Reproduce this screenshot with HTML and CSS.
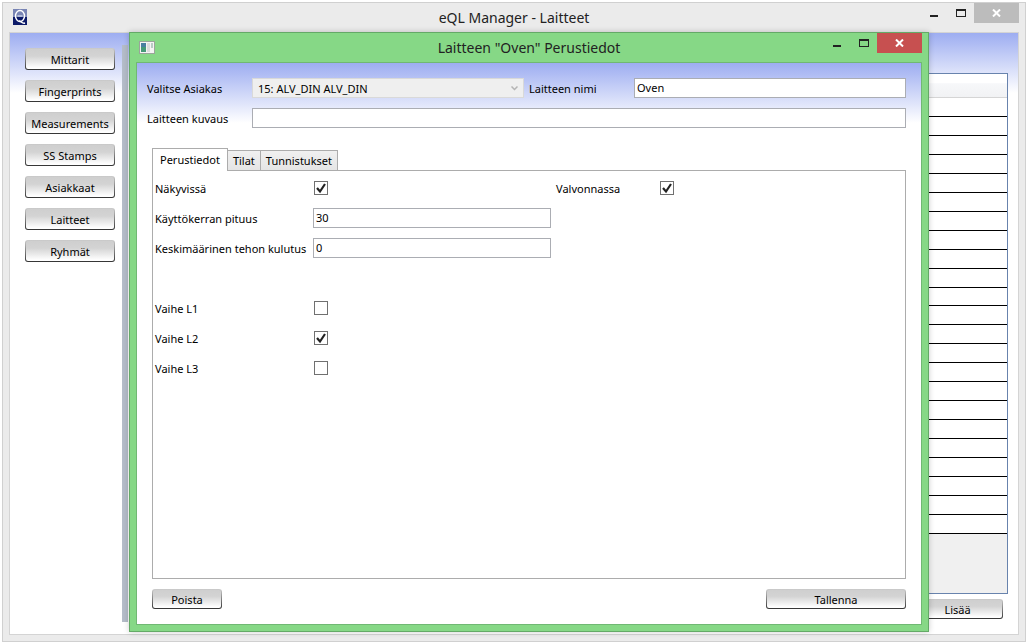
FILE: index.html
```html
<!DOCTYPE html>
<html lang="fi">
<head>
<meta charset="utf-8">
<title>eQL Manager - Laitteet</title>
<link rel="stylesheet" href="styles.css">
</head>
<body>
<div class="window main-window">
  <header class="caption">
    <svg class="app-icon" width="14" height="16" viewBox="0 0 14 16" aria-hidden="true">
      <rect width="14" height="16" fill="#7884b4"/>
      <rect y="8" width="14" height="8" fill="#0c1a68"/>
      <ellipse cx="7" cy="7" rx="4.500" ry="5.500" fill="none" stroke="#fff" stroke-width="1.5"/>
      <path d="M4.500 7h5" stroke="#c4cce4" stroke-width="1.5"/>
      <path d="M6 12c2 0 3 3 6 2" fill="none" stroke="#fff" stroke-width="1.5"/>
    </svg>
    <h1 class="caption-title">eQL Manager - Laitteet</h1>
    <div class="caption-buttons">
      <button class="cap-btn" aria-label="Minimize"><svg width="8" height="14" viewBox="0 0 8 14"><rect y="12" width="8" height="2" fill="#222"/></svg></button>
      <button class="cap-btn" aria-label="Maximize"><svg width="10" height="14" viewBox="0 0 10 14"><path d="M0 6h10v8H0zM1 8v5h8V8z" fill="#222" fill-rule="evenodd"/></svg></button>
      <button class="cap-btn close-btn" aria-label="Close"><svg width="9" height="8" viewBox="0 0 9 8"><path d="M1 .5l7 7M8 .5l-7 7" stroke="#fff" stroke-width="2"/></svg></button>
    </div>
  </header>
  <div class="client main-client">
    <nav class="sidebar">
      <button class="btn">Mittarit</button>
      <button class="btn">Fingerprints</button>
      <button class="btn">Measurements</button>
      <button class="btn">SS Stamps</button>
      <button class="btn">Asiakkaat</button>
      <button class="btn">Laitteet</button>
      <button class="btn">Ryhmät</button>
    </nav>
    <div class="splitter"></div>
    <main class="content">
      <div class="device-list">
        <table class="device-table">
          <thead><tr><th></th></tr></thead>
          <tbody>
            <tr><td></td></tr><tr><td></td></tr><tr><td></td></tr><tr><td></td></tr><tr><td></td></tr>
            <tr><td></td></tr><tr><td></td></tr><tr><td></td></tr><tr><td></td></tr><tr><td></td></tr>
            <tr><td></td></tr><tr><td></td></tr><tr><td></td></tr><tr><td></td></tr><tr><td></td></tr>
            <tr><td></td></tr><tr><td></td></tr><tr><td></td></tr><tr><td></td></tr><tr><td></td></tr>
            <tr><td></td></tr><tr><td></td></tr><tr><td></td></tr>
          </tbody>
        </table>
      </div>
      <div class="content-actions"><button class="btn">Lisää</button></div>
    </main>
  </div>
</div>

<div class="window dialog" role="dialog" aria-labelledby="dialog-title">
  <header class="caption">
    <svg class="dialog-icon" width="16" height="13" viewBox="0 0 16 13" aria-hidden="true">
      <rect x=".5" y=".5" width="15" height="12" fill="#f4f4f4" stroke="#9aa59a"/>
      <rect x="2" y="2" width="5" height="4" fill="#4a7fa0"/>
      <rect x="2" y="6" width="5" height="5" fill="#459a78"/>
      <rect x="8" y="2" width="3" height="9" fill="#dcdcdc"/>
      <rect x="12" y="2" width="2" height="5" fill="#b8ccc4"/>
    </svg>
    <h2 class="caption-title" id="dialog-title">Laitteen "Oven" Perustiedot</h2>
    <div class="caption-buttons">
      <button class="cap-btn" aria-label="Minimize"><svg width="8" height="14" viewBox="0 0 8 14"><rect y="12" width="8" height="2" fill="#222"/></svg></button>
      <button class="cap-btn" aria-label="Maximize"><svg width="10" height="14" viewBox="0 0 10 14"><path d="M0 6h10v8H0zM1 8v5h8V8z" fill="#222" fill-rule="evenodd"/></svg></button>
      <button class="cap-btn close-btn" aria-label="Close"><svg width="9" height="8" viewBox="0 0 9 8"><path d="M1 .5l7 7M8 .5l-7 7" stroke="#fff" stroke-width="2"/></svg></button>
    </div>
  </header>
  <form class="client dialog-client">
    <div class="device-form">
      <label for="customer">Valitse Asiakas</label>
      <div class="select-wrap">
        <select id="customer" class="select" disabled><option>15: ALV_DIN ALV_DIN</option></select>
        <svg class="chevron" width="7" height="5" viewBox="0 0 7 5" aria-hidden="true"><path d="M.5 .5l3 3 3-3" fill="none" stroke="#b4b4b4" stroke-width="1.5"/></svg>
      </div>
      <label class="indent" for="name">Laitteen nimi</label>
      <input id="name" class="field" type="text" value="Oven">
      <label for="description">Laitteen kuvaus</label>
      <input id="description" class="field wide" type="text">
    </div>
    <div class="tabs" role="tablist">
      <button type="button" class="tab selected" role="tab" aria-selected="true">Perustiedot</button>
      <button type="button" class="tab" role="tab">Tilat</button>
      <button type="button" class="tab" role="tab">Tunnistukset</button>
    </div>
    <div class="panel" role="tabpanel">
      <div class="rows">
        <label for="visible">Näkyvissä</label>
        <input id="visible" class="check" type="checkbox" checked>
        <label class="indent" for="watched">Valvonnassa</label>
        <input id="watched" class="check" type="checkbox" checked>
        <label class="first" for="length">Käyttökerran pituus</label>
        <input id="length" class="field" type="text" value="30">
        <label class="first" for="power">Keskimäärinen tehon kulutus</label>
        <input id="power" class="field" type="text" value="0">
      </div>
      <div class="rows">
        <label class="first" for="l1">Vaihe L1</label>
        <input id="l1" class="check" type="checkbox">
        <label class="first" for="l2">Vaihe L2</label>
        <input id="l2" class="check" type="checkbox" checked>
        <label class="first" for="l3">Vaihe L3</label>
        <input id="l3" class="check" type="checkbox">
      </div>
    </div>
    <footer class="dialog-actions">
      <button type="button" class="btn delete">Poista</button>
      <button type="button" class="btn save">Tallenna</button>
    </footer>
  </form>
</div>
</body>
</html>
```

FILE: styles.css
```css
* { box-sizing: border-box; }

body {
  margin: 0;
  height: 100vh;
  padding: 2px 3px 2px 2px;
  background: #fff;
  color: #000;
  font: 11px/16px "Noto Sans", "Open Sans", sans-serif;
}

button, input, select { font: inherit; color: inherit; margin: 0; }

/* Window frames */
.window { display: flex; flex-direction: column; }

.main-window {
  height: 100%;
  padding: 0 6px 6px;
  border: 1px solid #d0d0d0;
  background: #ebebeb;
}

.dialog {
  position: absolute;
  inset: 32px 100px 12px 129px;
  padding: 0 6px 6px;
  border: 1px solid #64aa67;
  background: #86d886;
  box-shadow: 0 0 6px rgba(0, 0, 0, 0.2);
}

.caption {
  flex: none;
  display: grid;
  grid-template-columns: 135px 1fr 135px;
  height: 29px;
}

.app-icon { margin: 6px 0 0 4px; }
.dialog-icon { margin: 8px 0 0 3px; }

.caption-title {
  margin: 0;
  text-align: center;
  font-size: 14px;
  line-height: 29px;
  font-weight: 400;
  color: #222;
}

.caption-buttons {
  display: flex;
  justify-content: flex-end;
  align-items: flex-start;
}

.cap-btn {
  display: flex;
  justify-content: center;
  width: 27px;
  height: 20px;
  padding: 0;
  border: 0;
  background: none;
}

.close-btn { align-items: center; width: 45px; background: #bcbcbc; }
.dialog .close-btn { background: #c75050; }

.client {
  flex: 1;
  min-height: 0;
  border: 1px solid #d4d4d4;
  background: linear-gradient(#9dadf1, #fff 60px) #fff;
}

/* Main window */
.main-client { display: flex; padding: 12px 10px 12px 0; }

.sidebar {
  display: flex;
  flex-direction: column;
  gap: 10px;
  padding: 3px 7px 0 15px;
}

.sidebar .btn { width: 90px; height: 22px; }

.splitter { flex: none; width: 6px; background: #b4bcc8; }

.content {
  flex: 1;
  display: flex;
  flex-direction: column;
  padding: 28px 0 3px 12px;
}

.device-list {
  flex: 1;
  min-height: 0;
  overflow: hidden;
  border: 1px solid #6883ad;
  background: #f0f0f0;
}

.device-table {
  width: 100%;
  height: 460px;
  border-collapse: separate;
  border-spacing: 0;
}

.device-table th {
  height: 24px;
  padding: 0;
  border-bottom: 1px solid #d5d5d5;
  background: linear-gradient(#fff 38%, #f7f8fa 42%, #f1f2f4);
}

.device-table td { padding: 0; border-bottom: 1px solid #000; background: #fff; }

.content-actions { display: flex; justify-content: flex-end; padding: 5px 5px 0 0; }
.content-actions .btn { width: 91px; }

.btn {
  height: 20px;
  padding: 2px 0 0;
  border: 1px solid transparent;
  border-radius: 3px;
  background:
    linear-gradient(#cfcfcf, #d3d3d3 35%, #fff 95%) padding-box,
    linear-gradient(#cdcdcd, #333) border-box;
  text-align: center;
}

/* Dialog */
.dialog .client { border-color: #70b873; }

.dialog-client { display: flex; flex-direction: column; padding: 15px; }

.device-form {
  display: grid;
  grid-template-columns: 105px 1fr 110px 1fr;
  grid-auto-rows: 20px;
  row-gap: 10px;
  align-items: center;
  margin-left: -5px;
}

label { padding-top: 2px; white-space: nowrap; }
.indent { padding-left: 5px; }

.field, .select {
  width: 100%;
  height: 20px;
  border: 1px solid #abadb3;
  border-radius: 0;
  background: #fff;
}

.field { padding: 0 2px 1px; }
.wide { grid-column: 2 / -1; }

.select-wrap { display: grid; align-items: center; }
.select-wrap > * { grid-area: 1 / 1; }

.select {
  appearance: none;
  padding: 1px 5px 0;
  border-color: #d9d9d9;
  background: #efefef;
  color: #000;
  opacity: 1;
}

.chevron { justify-self: end; margin-right: 6px; }

.tabs { display: flex; align-items: flex-end; margin-top: 20px; }

.tab {
  height: 20px;
  padding: 1px 5px 0;
  border: 1px solid #acacac;
  border-width: 1px 1px 0 0;
  background: linear-gradient(#f0f0f0, #e5e5e5);
}

.tab.selected {
  z-index: 1;
  height: 23px;
  margin-bottom: -1px;
  padding: 0 7px;
  border-left-width: 1px;
  background: #fff;
}

.panel {
  flex: 1;
  display: flex;
  flex-direction: column;
  gap: 40px;
  padding: 7px 2px;
  border: 1px solid #acacac;
  background: #fff;
}

.rows {
  display: grid;
  grid-template-columns: 158px 238px 108px 1fr;
  grid-auto-rows: 20px;
  align-items: center;
  row-gap: 10px;
}

.first { grid-column: 1; }

.check {
  appearance: none;
  width: 14px;
  height: 14px;
  margin-left: 1px;
  border: 1px solid #707070;
  background: #fff;
}

.check:checked {
  background: url("data:image/svg+xml,%3Csvg xmlns='http://www.w3.org/2000/svg' viewBox='0 0 12 12'%3E%3Cpath d='M2 6l3 3.500L10 2' fill='none' stroke='%23222' stroke-width='2.200'/%3E%3C/svg%3E") center / 12px 12px no-repeat #fff;
}

.dialog-actions { display: flex; justify-content: space-between; margin-top: 10px; }
.delete { width: 70px; }
.save { width: 140px; }
```
